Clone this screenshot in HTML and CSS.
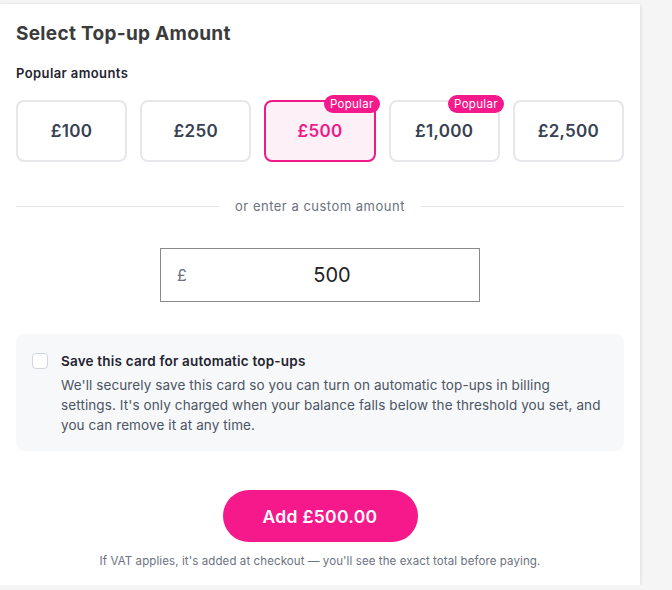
FILE: index.html
```html
<!DOCTYPE html>
<html lang="en">
<head>
  <meta charset="UTF-8" />
  <meta name="viewport" content="width=device-width, initial-scale=1" />
  <title>Top-up</title>
  <link rel="stylesheet" href="styles.css">
</head>
<body>
  <div class="panel">
    <h2>Select Top-up Amount</h2>
    <div class="label">Popular amounts</div>

    <!-- Preset amounts -->
    <div class="amounts">
      <button class="amount">£100</button>
      <button class="amount">£250</button>
      <button class="amount selected">£500<span class="badge">Popular</span></button>
      <button class="amount">£1,000<span class="badge">Popular</span></button>
      <button class="amount">£2,500</button>
    </div>

    <div class="divider"><span>or enter a custom amount</span></div>

    <div class="custom">
      <div class="custom-input">
        <span class="currency">£</span>
        <span class="value">500</span>
      </div>
    </div>

    <!-- Save card option -->
    <label class="save-card">
      <span class="check"></span>
      <span class="save-text">
        <strong>Save this card for automatic top-ups</strong>
        <span>We'll securely save this card so you can turn on automatic top-ups in billing settings. It's only charged when your balance falls below the threshold you set, and you can remove it at any time.</span>
      </span>
    </label>

    <div class="actions">
      <button class="pay-btn">Add £500.00</button>
      <p class="note">If VAT applies, it's added at checkout — you'll see the exact total before paying.</p>
    </div>
  </div>
</body>
</html>
```

FILE: styles.css
```css
* {
  margin: 0;
  padding: 0;
  box-sizing: border-box;
  font-family: 'Inter', sans-serif;
}
body {
  background: #f5f5f5;
  padding-top: 4px;
}

.panel {
  width: 640px;
  background: #fff;
  padding: 18px 16px 17px;
  box-shadow: 0 1px 4px rgba(0, 0, 0, 0.15);
}
.panel h2 {
  font-size: 19px;
  font-weight: 700;
  color: #3b3b3b;
  line-height: 24px;
  letter-spacing: 0.3px;
}
.label {
  margin-top: 19px;
  font-size: 13px;
  font-weight: 600;
  color: #1f2430;
  letter-spacing: 0.4px;
}

.amounts {
  margin-top: 19px;
  display: grid;
  grid-template-columns: repeat(5, 1fr);
  gap: 13px;
}
.amount {
  position: relative;
  height: 62px;
  background: #fff;
  border: 2px solid #e5e7eb;
  border-radius: 8px;
  font-size: 17px;
  font-weight: 600;
  color: #374151;
  letter-spacing: 0.3px;
  cursor: pointer;
}
.amount.selected {
  background: #fdf0f7;
  border-color: #f0198a;
  color: #f0198a;
}
.badge {
  position: absolute;
  top: -7px;
  right: -6px;
  background: #f5198b;
  color: #fff;
  font-size: 11.5px;
  font-weight: 400;
  line-height: 18px;
  padding: 0 6px;
  border-radius: 9px;
}

.divider {
  margin-top: 36px;
  display: flex;
  align-items: center;
  gap: 16px;
  font-size: 13px;
  color: #6b7280;
  letter-spacing: 0.5px;
}
.divider::before,
.divider::after {
  content: "";
  flex: 1;
  height: 1px;
  background: #e5e7eb;
}

.custom {
  margin-top: 34px;
  display: flex;
  justify-content: center;
}
.custom-input {
  width: 320px;
  height: 54px;
  border: 1px solid #8a8a8a;
  display: grid;
  grid-template-columns: 40px 1fr 16px;
  align-items: center;
}
.currency {
  padding-left: 16px;
  font-size: 16px;
  color: #6b7280;
}
.value {
  text-align: center;
  font-size: 20px;
  color: #222;
}

.save-card {
  margin-top: 32px;
  display: flex;
  gap: 13px;
  padding: 17px 16px 16px;
  background: #f7f8fa;
  border-radius: 8px;
}
.check {
  flex: none;
  width: 16px;
  height: 16px;
  margin-top: 2px;
  background: #fff;
  border: 1px solid #d1d5db;
  border-radius: 4px;
}
.save-text {
  display: flex;
  flex-direction: column;
  gap: 4px;
  font-size: 13.5px;
  line-height: 20px;
  color: #4b5563;
  letter-spacing: 0.1px;
}
.save-text strong {
  font-weight: 600;
  color: #1f2430;
  letter-spacing: 0.2px;
}

.actions {
  margin-top: 39px;
  display: flex;
  flex-direction: column;
  align-items: center;
}
.pay-btn {
  width: 195px;
  height: 52px;
  border: none;
  border-radius: 26px;
  background: #f5198b;
  color: #fff;
  font-size: 17.5px;
  font-weight: 600;
  letter-spacing: 0.3px;
  cursor: pointer;
}
.note {
  margin-top: 12px;
  font-size: 11.5px;
  color: #6b7280;
  letter-spacing: 0.1px;
}
```
